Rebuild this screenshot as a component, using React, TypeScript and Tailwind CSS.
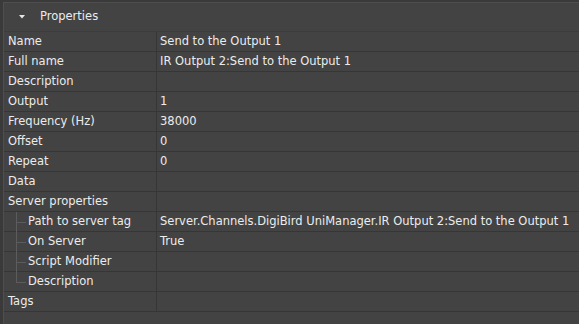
const rows: { name: string; value?: string; child?: boolean; last?: boolean }[] = [
  { name: 'Name', value: 'Send to the Output 1' },
  { name: 'Full name', value: 'IR Output 2:Send to the Output 1' },
  { name: 'Description' },
  { name: 'Output', value: '1' },
  { name: 'Frequency (Hz)', value: '38000' },
  { name: 'Offset', value: '0' },
  { name: 'Repeat', value: '0' },
  { name: 'Data' },
  { name: 'Server properties' },
  { name: 'Path to server tag', value: 'Server.Channels.DigiBird UniManager.IR Output 2:Send to the Output 1', child: true },
  { name: 'On Server', value: 'True', child: true },
  { name: 'Script Modifier', child: true },
  { name: 'Description', child: true, last: true },
  { name: 'Tags' },
]

export default function App() {
  return (
    <div
      className="w-[579px] h-[324px] bg-[#3a3a3a] pt-[2px] overflow-hidden text-[11.5px] text-[#ececec]"
      style={{ fontFamily: 'Tahoma, "DejaVu Sans", sans-serif' }}
    >
      <div className="h-full border-t border-l border-[#4e4e4e] bg-[#434343] ml-[3px]">
        {/* header */}
        <div className="h-[29px] flex items-center border-b border-[#3c3c3c]">
          <svg width="8" height="6" viewBox="0 0 8 6" className="ml-[14px]">
            <path d="M1 1 L4 4.5 L7 1 Z" fill="#e6e6e6" />
          </svg>
          <span className="ml-[14px]">Properties</span>
        </div>

        {rows.map((r, i) => (
          <div key={i} className="flex h-[20px] border-b border-[#363636]">
            <div className="relative w-[153px] shrink-0 flex items-center border-r border-[#363636]">
              {r.child && (
                <>
                  <div className={`absolute left-[12px] top-0 w-px bg-[#5c5c5c] ${r.last ? 'h-[10px]' : 'h-[20px]'}`} />
                  <div className="absolute left-[12px] top-[10px] w-[10px] h-px bg-[#5c5c5c]" />
                </>
              )}
              <span className={r.child ? 'pl-[24px]' : 'pl-[4px]'}>{r.name}</span>
            </div>
            <div className="flex-1 min-w-0 flex items-center pl-[3px] whitespace-nowrap overflow-hidden">{r.value}</div>
          </div>
        ))}
      </div>
    </div>
  )
}
